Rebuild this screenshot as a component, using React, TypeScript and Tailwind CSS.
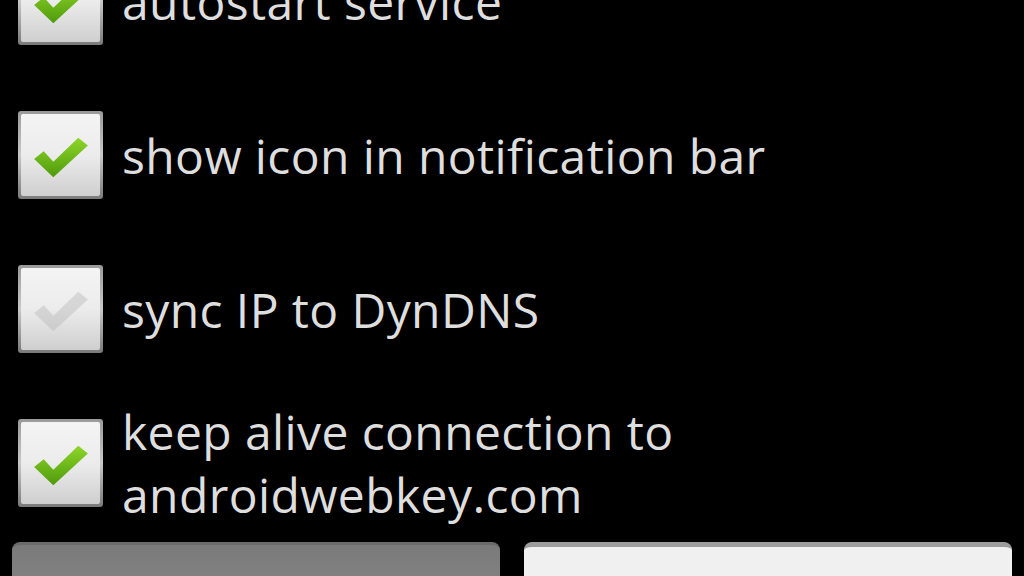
import { ReactNode } from "react";

// settings rows shown in the preferences screen
type Pref = {
  label: ReactNode;
  checked: boolean;
  disabled?: boolean;
};

const PREFS: Pref[] = [
  { label: "autostart service", checked: true },
  { label: "show icon in notification bar", checked: true },
  { label: "sync IP to DynDNS", checked: false, disabled: true },
  {
    label: (
      <>
        keep alive connection to
        <br />
        androidwebkey.com
      </>
    ),
    checked: true,
  },
];

// old-style android checkbox: light bevelled square with a green tick
function CheckBox({ checked, disabled }: { checked: boolean; disabled?: boolean }) {
  return (
    <div className="shrink-0 w-[85px] h-[88px] rounded-[3px] p-[3px] bg-gradient-to-b from-[#9a9a9a] via-[#c8c8c8] to-[#7a7a7a]">
      <div className="w-full h-full rounded-[2px] bg-gradient-to-b from-[#f4f4f4] via-[#ececec] to-[#cfcfcf] flex items-center justify-center">
        {checked && (
          <svg viewBox="0 0 60 50" className="w-[58px] h-[48px] mt-[4px]">
            <defs>
              <linearGradient id="tick" x1="0" y1="0" x2="0" y2="1">
                <stop offset="0" stopColor="#8ed62a" />
                <stop offset="1" stopColor="#4f9a0c" />
              </linearGradient>
            </defs>
            <path
              d="M2 27 L12 19 L22 30 L48 5 L58 13 L22 46 Z"
              fill="url(#tick)"
            />
          </svg>
        )}
        {!checked && disabled && (
          <svg viewBox="0 0 60 50" className="w-[58px] h-[48px] mt-[4px] opacity-40">
            <path d="M2 27 L12 19 L22 30 L48 5 L58 13 L22 46 Z" fill="#b4b4b4" />
          </svg>
        )}
      </div>
    </div>
  );
}

export default function App() {
  return (
    <div
      className="w-[1024px] h-[576px] overflow-hidden bg-black text-[#dedede]"
      style={{ fontFamily: '"Open Sans", "Noto Sans", "DejaVu Sans", sans-serif' }}
    >
      {/* preference list, scrolled so the first row is partly hidden */}
      <div className="-mt-[76px] flex flex-col">
        {PREFS.map((p, i) => (
          <div key={i} className="h-[154px] flex items-center pl-[18px] gap-[19px]">
            <CheckBox checked={p.checked} disabled={p.disabled} />
            <div className="text-[48px] leading-[63px] tracking-[0.4px]">{p.label}</div>
          </div>
        ))}
      </div>

      {/* bottom action buttons */}
      <div className="mt-[2px] flex gap-[24px] px-[12px]">
        <button className="flex-1 h-[80px] rounded-t-[8px] bg-gradient-to-b from-[#7a7a7a] to-[#8a8a8a] border-t-[3px] border-[#6a6a6a]" />
        <button className="flex-1 h-[80px] rounded-t-[8px] bg-[#f0f0f0] border-t-[5px] border-[#9c9c9c]" />
      </div>
    </div>
  );
}
